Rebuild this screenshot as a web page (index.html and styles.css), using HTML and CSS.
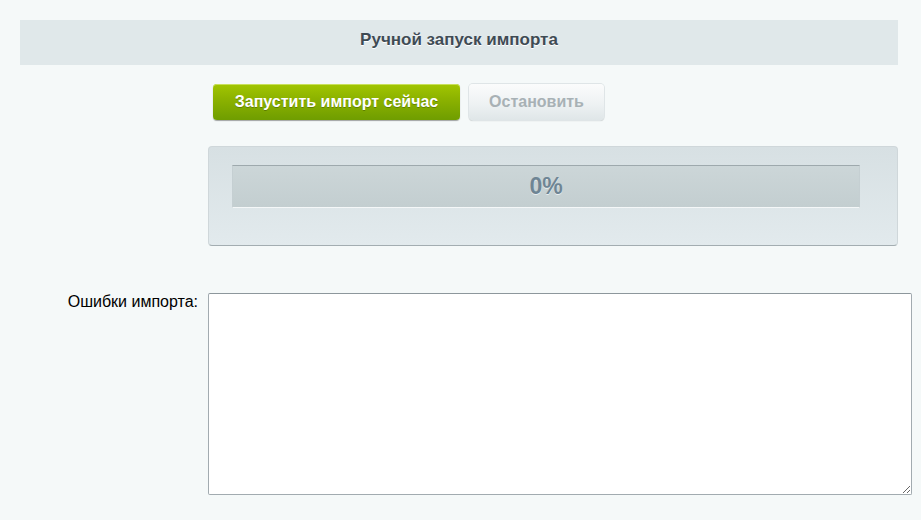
FILE: index.html
```html
<!DOCTYPE html>
<html>
<head>
<meta charset="utf-8">
<link rel="stylesheet" href="styles.css">
</head>
<body>
<div class="page">
  <div class="heading">Ручной запуск импорта</div>
  <div class="form">
    <div class="label"></div>
    <div class="field buttons">
      <button class="btn btn-save">Запустить импорт сейчас</button>
      <button class="btn btn-stop">Остановить</button>
    </div>
    <div class="label"></div>
    <div class="field">
      <div class="progress-panel">
        <div class="progress-bar"><span class="progress-text">0%</span></div>
      </div>
    </div>
    <div class="label errors-label">Ошибки импорта:</div>
    <div class="field">
      <textarea class="errors"></textarea>
    </div>
  </div>
</div>
</body>
</html>
```
FILE: styles.css
```css
html, body {
  margin: 0;
  padding: 0;
  background: #f5f9f9;
  font-family: "Liberation Sans", Arial, sans-serif;
}
.page {
  padding: 20px 23px 0 20px;
}
.heading {
  height: 45px;
  box-sizing: border-box;
  line-height: 39px;
  padding-bottom: 6px;
  background: #e0e8ea;
  text-align: center;
  font-size: 17px;
  font-weight: bold;
  color: #3f4b54;
  text-shadow: 0 1px #fff;
}
.form {
  display: grid;
  grid-template-columns: 188px 1fr;
  row-gap: 0;
}
.buttons {
  padding: 19px 0 0 5px;
  display: flex;
  gap: 9px;
}
.btn {
  height: 36px;
  border-radius: 4px;
  font-family: "Liberation Sans", Arial, sans-serif;
  font-size: 16px;
  font-weight: bold;
  padding: 0 10px;
  cursor: pointer;
}
.btn-save {
  width: 247px;
  color: #fff;
  border: none;
  background: linear-gradient(to bottom, #a2c601 0%, #8db300 40%, #6f9d00 100%);
  box-shadow: inset 0 1px #c8e05a, 0 1px 1px rgba(0,0,0,0.35);
  text-shadow: 0 1px rgba(0,0,0,0.25);
}
.btn-stop {
  width: 135px;
  color: #a8b1b5;
  border: none;
  background: linear-gradient(to bottom, #fbfcfc 0%, #eef2f3 55%, #dfe6e8 100%);
  box-shadow: 0 0 0 1px #dfe5e7, 0 1px 1px rgba(0,0,0,0.25);
}
.progress-panel {
  margin-top: 26px;
  width: 690px;
  height: 100px;
  box-sizing: border-box;
  border: 1px solid #cfd7da;
  border-bottom-color: #a3adb1;
  border-radius: 4px;
  background: linear-gradient(to bottom, #d7e0e3, #e2eaed);
  padding: 18px 37px 0 23px;
}
.progress-bar {
  height: 43px;
  box-sizing: border-box;
  border: 1px solid #c5cfd2;
  border-top-color: #9ea9ad;
  border-bottom-color: #f4f7f8;
  background: linear-gradient(to bottom, #ccd6d8, #c3ced0);
  display: flex;
  align-items: center;
  justify-content: center;
}
.progress-text {
  font-size: 23px;
  font-weight: bold;
  color: #6f8594;
  text-shadow: 0 1px #e8eef0;
}
.errors-label {
  margin-top: 47px;
  text-align: right;
  padding-right: 10px;
  font-size: 16px;
  color: #000;
  padding-top: 0;
}
.errors {
  display: block;
  margin-top: 47px;
  width: 704px;
  height: 202px;
  box-sizing: border-box;
  border: 1px solid #a2abb0;
  border-top-color: #8d979c;
  border-radius: 2px;
  background: #fff;
  resize: both;
}
```
